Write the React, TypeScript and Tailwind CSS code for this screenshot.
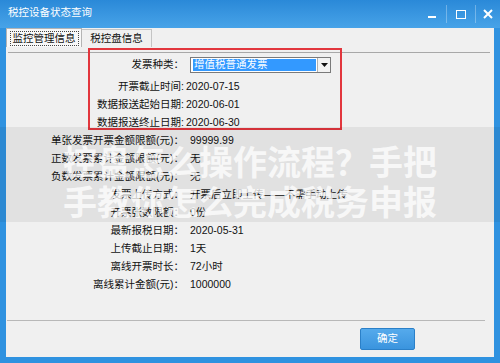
import React from "react";

const font = "font-['Liberation_Sans','Noto_Sans_CJK_SC',sans-serif]";

type Row = { label: string; value: string; boxed?: boolean };

const rows: Row[] = [
  { label: "开票截止时间:", value: "2020-07-15", boxed: true },
  { label: "数据报送起始日期:", value: "2020-06-01", boxed: true },
  { label: "数据报送终止日期:", value: "2020-06-30", boxed: true },
  { label: "单张发票开票金额限额(元)：", value: "99999.99" },
  { label: "正数发票累计金额限额(元)：", value: "无" },
  { label: "负数发票累计金额限额(元)：", value: "无" },
  { label: "发票上传方式：", value: "开票后立即上传——不需手动上传" },
  { label: "开票张数限额：", value: "0份" },
  { label: "最新报税日期：", value: "2020-05-31" },
  { label: "上传截止日期：", value: "1天" },
  { label: "离线开票时长：", value: "72小时" },
  { label: "离线累计金额(元)：", value: "1000000" },
];

function InfoRow({ row }: { row: Row }) {
  return (
    <div className="flex h-[18px] items-center">
      <div className="w-[178px] shrink-0 text-right">{row.label}</div>
      <div className={row.boxed ? "ml-[2px]" : "ml-[6px]"}>{row.value}</div>
    </div>
  );
}

export default function App() {
  return (
    <div
      className={`relative flex h-[363px] w-[500px] flex-col overflow-hidden bg-[#2f92e0] text-[10.5px] text-[#111] ${font}`}
    >
      {/* title bar */}
      <div className="flex h-[28px] shrink-0 items-center bg-gradient-to-b from-[#2a89d8] to-[#47a3e8] pl-[8px] text-white">
        <span className="pb-[2px]">税控设备状态查询</span>
        <div className="ml-auto flex h-full items-center">
          <div className="flex h-full w-[28px] items-center justify-center">
            <div className="mt-[6px] h-[2px] w-[8px] bg-white" />
          </div>
          <div className="h-[18px] w-px bg-white/30" />
          <div className="flex h-full w-[28px] items-center justify-center">
            <div className="h-[9px] w-[10px] border-[1.5px] border-white" />
          </div>
          <div className="h-[18px] w-px bg-white/30" />
          <div className="flex h-full w-[24px] items-center justify-center">
            <svg width="10" height="10" viewBox="0 0 10 10">
              <path d="M1 1 L9 9 M9 1 L1 9" stroke="white" strokeWidth="2" />
            </svg>
          </div>
        </div>
      </div>

      {/* body */}
      <div className="mx-[6px] mb-[6px] flex flex-1 flex-col bg-[#f0f0f0]">
        <div className="flex h-[19px] items-end">
          <div className="flex h-[19px] w-[76px] items-center justify-center border border-b-0 border-[#b4b4b4] bg-[#f8f8f8]">
            <span className="border border-dotted border-[#444] px-[2px] leading-[13px]">监控管理信息</span>
          </div>
          <div className="flex h-[18px] w-[70px] items-center justify-center border border-b-0 border-l-0 border-[#c4c4c4] bg-[#f0f0f0]">
            税控盘信息
          </div>
        </div>

        <div className="ml-[2px] mr-[4px] mt-[5px] border-t border-[#a8a8a8]" />

        <div className="pt-[3px]">
          <div className="flex h-[18px] items-center">
            <div className="w-[178px] shrink-0 text-right">发票种类：</div>
            <div className="ml-[6px] flex h-[16px] w-[141px] items-center border border-[#7a7a7a] bg-white pl-[2px]">
              <div className="flex h-[12px] flex-1 items-center bg-[#3399ff] pl-[1px] text-white">增值税普通发票</div>
              <div className="ml-[1px] flex h-[14px] w-[13px] items-center justify-center border-l border-[#b0b0b0] bg-[#f2f2f2]">
                <svg width="7" height="4" viewBox="0 0 7 4">
                  <path d="M0 0 H7 L3.5 4 Z" fill="#111" />
                </svg>
              </div>
            </div>
          </div>
          <div className="h-[4px]" />
          {rows.map((row) => (
            <InfoRow key={row.label} row={row} />
          ))}
        </div>

        <div className="ml-[1px] mr-[9px] mt-[26px] border-t border-[#b8b8b8]" />

        <div className="mt-[7px] flex">
          <button
            type="button"
            className="ml-[354px] h-[22px] w-[55px] rounded-[2px] border border-[#2b80c8] bg-gradient-to-b from-[#55aaec] to-[#3a94de] text-[10.5px] text-white"
          >
            确定
          </button>
        </div>
      </div>

      {/* red annotation box */}
      <div className="absolute left-[88px] top-[48px] h-[82px] w-[254px] border-2 border-[#e2363d]" />

      {/* watermark band */}
      <div className="absolute left-0 top-[127px] flex h-[95px] w-full flex-col items-center bg-black/[0.06] pt-[14px] font-['Noto_Sans_CJK_SC',sans-serif] text-[34px] font-bold leading-[40px] text-white/75">
        <div>控盘怎么操作流程？手把</div>
        <div>手教你怎么完成税务申报</div>
      </div>
    </div>
  );
}
